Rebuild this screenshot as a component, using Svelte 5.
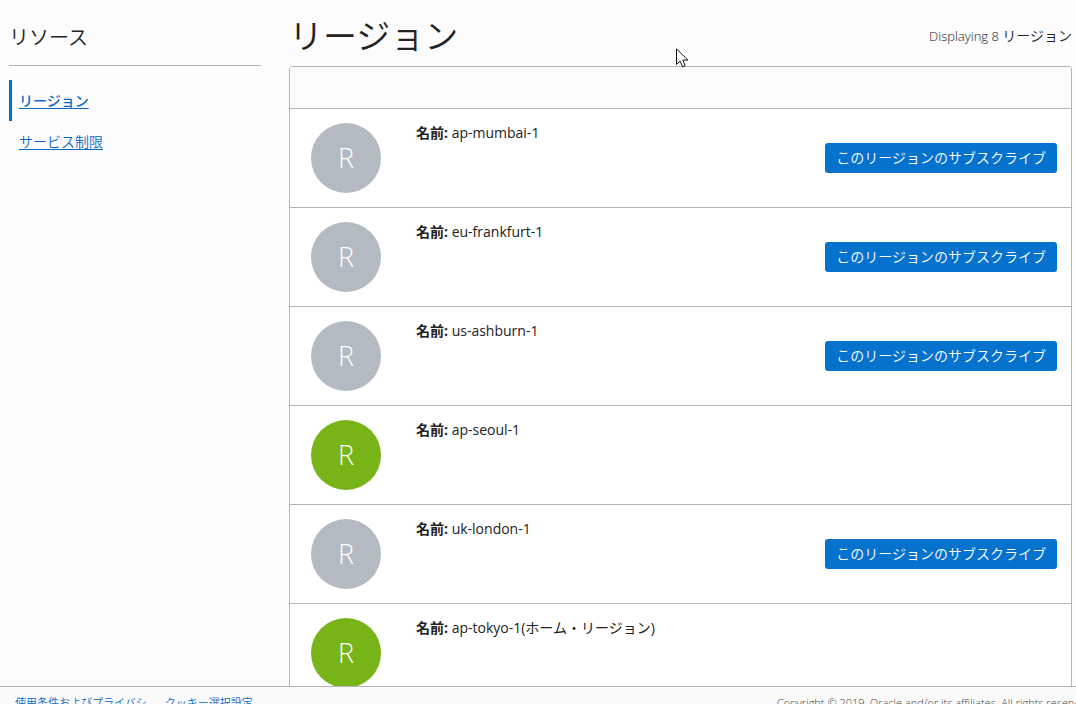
<script>
  const regions = [
    { name: 'ap-mumbai-1', subscribed: false },
    { name: 'eu-frankfurt-1', subscribed: false },
    { name: 'us-ashburn-1', subscribed: false },
    { name: 'ap-seoul-1', subscribed: true },
    { name: 'uk-london-1', subscribed: false },
    { name: 'ap-tokyo-1(ホーム・リージョン)', subscribed: true }
  ];
</script>

<div class="page">
  <div class="body">
    <aside>
      <h2>リソース</h2>
      <nav>
        <a class="active" href="#regions" aria-current="page">リージョン</a>
        <a href="#limits">サービス制限</a>
      </nav>
    </aside>
    <main>
      <header>
        <h1>リージョン</h1>
        <p class="count">Displaying 8 <span>リージョン</span></p>
      </header>
      <section class="list">
        <div class="toolbar"></div>
        {#each regions as region}
          <article>
            <div class="badge" class:subscribed={region.subscribed}>R</div>
            <p class="name"><strong>名前:</strong> {region.name}</p>
            {#if !region.subscribed}
              <button type="button">このリージョンのサブスクライブ</button>
            {/if}
          </article>
        {/each}
      </section>
    </main>
  </div>
  <footer>
    <a href="#terms">使用条件およびプライバシ</a>
    <a href="#cookies">クッキー選択設定</a>
    <p>Copyright © 2019, Oracle and/or its affiliates. All rights reserved.</p>
  </footer>
  <svg class="pointer" width="13" height="21" viewBox="0 0 13 21" aria-hidden="true">
    <path d="M.5 .8V16.5L4.1 13.1L6.6 18.8L9.2 17.7L6.8 12.1H11.8Z" fill="#fff" stroke="#111" />
  </svg>
</div>

<style>
  :global(body) {
    margin: 0;
    background: #fcfcfc;
  }
  .page {
    position: relative;
    display: flex;
    flex-direction: column;
    height: 100vh;
    overflow: hidden;
    color: #222;
    font: 350 14px/20px 'Open Sans', 'Noto Sans CJK JP', sans-serif;
  }
  h1,
  h2,
  p {
    margin: 0;
    font-weight: 350;
  }
  a {
    color: #0a6ac6;
  }
  .body {
    display: flex;
    flex: 1;
    gap: 28px;
    min-height: 0;
    padding: 0 4px 0 9px;
    overflow: hidden;
  }
  aside {
    flex: 0 0 252px;
  }
  h2 {
    padding: 23px 0 12px;
    border-bottom: 1px solid #b3b3b9;
    font-size: 20px;
    line-height: 30px;
  }
  nav {
    display: flex;
    flex-direction: column;
    padding-top: 14px;
  }
  nav a {
    padding: 0 7px;
    border-left: 3px solid transparent;
    line-height: 41px;
    text-underline-offset: 2px;
  }
  nav a.active {
    border-color: #0572ce;
    font-weight: 500;
  }
  main {
    flex: 1;
    min-width: 0;
  }
  header {
    display: flex;
    align-items: center;
    justify-content: space-between;
    box-sizing: border-box;
    height: 66px;
    padding-top: 6px;
  }
  h1 {
    font-size: 34px;
    line-height: 64px;
  }
  .count {
    font-size: 13px;
  }
  .count span {
    font-size: 14px;
  }
  .list {
    border: 1px solid #b3b3b9;
    border-radius: 3px 3px 0 0;
    background: #fff;
  }
  .toolbar {
    height: 41px;
    background: #fbfbfb;
  }
  article {
    display: flex;
    align-items: center;
    gap: 35px;
    height: 98px;
    padding: 0 14px 0 21px;
    border-top: 1px solid #b3b3b9;
  }
  .badge {
    flex: none;
    width: 70px;
    height: 70px;
    border-radius: 50%;
    background: #b3bac2;
    color: #fff;
    font-size: 27px;
    line-height: 70px;
    text-align: center;
  }
  .badge.subscribed {
    background: #76b417;
  }
  .name {
    flex: 1;
    align-self: flex-start;
    padding-top: 14px;
    font-weight: 400;
  }
  strong {
    font-weight: 700;
  }
  button {
    height: 30px;
    padding: 0 11px;
    border: 0;
    border-radius: 3px;
    background: #0572ce;
    color: #fff;
    font: inherit;
    white-space: nowrap;
  }
  footer {
    display: flex;
    flex: none;
    gap: 18px;
    height: 17px;
    padding-left: 15px;
    overflow: hidden;
    border-top: 1px solid #b3b3b9;
    background: #fafafa;
    font-size: 11px;
    line-height: 31px;
    white-space: nowrap;
  }
  footer p {
    flex: 0 0 299px;
    margin-left: auto;
    overflow: hidden;
    color: #444;
  }
  .pointer {
    position: absolute;
    top: 48px;
    left: 676px;
  }
</style>
